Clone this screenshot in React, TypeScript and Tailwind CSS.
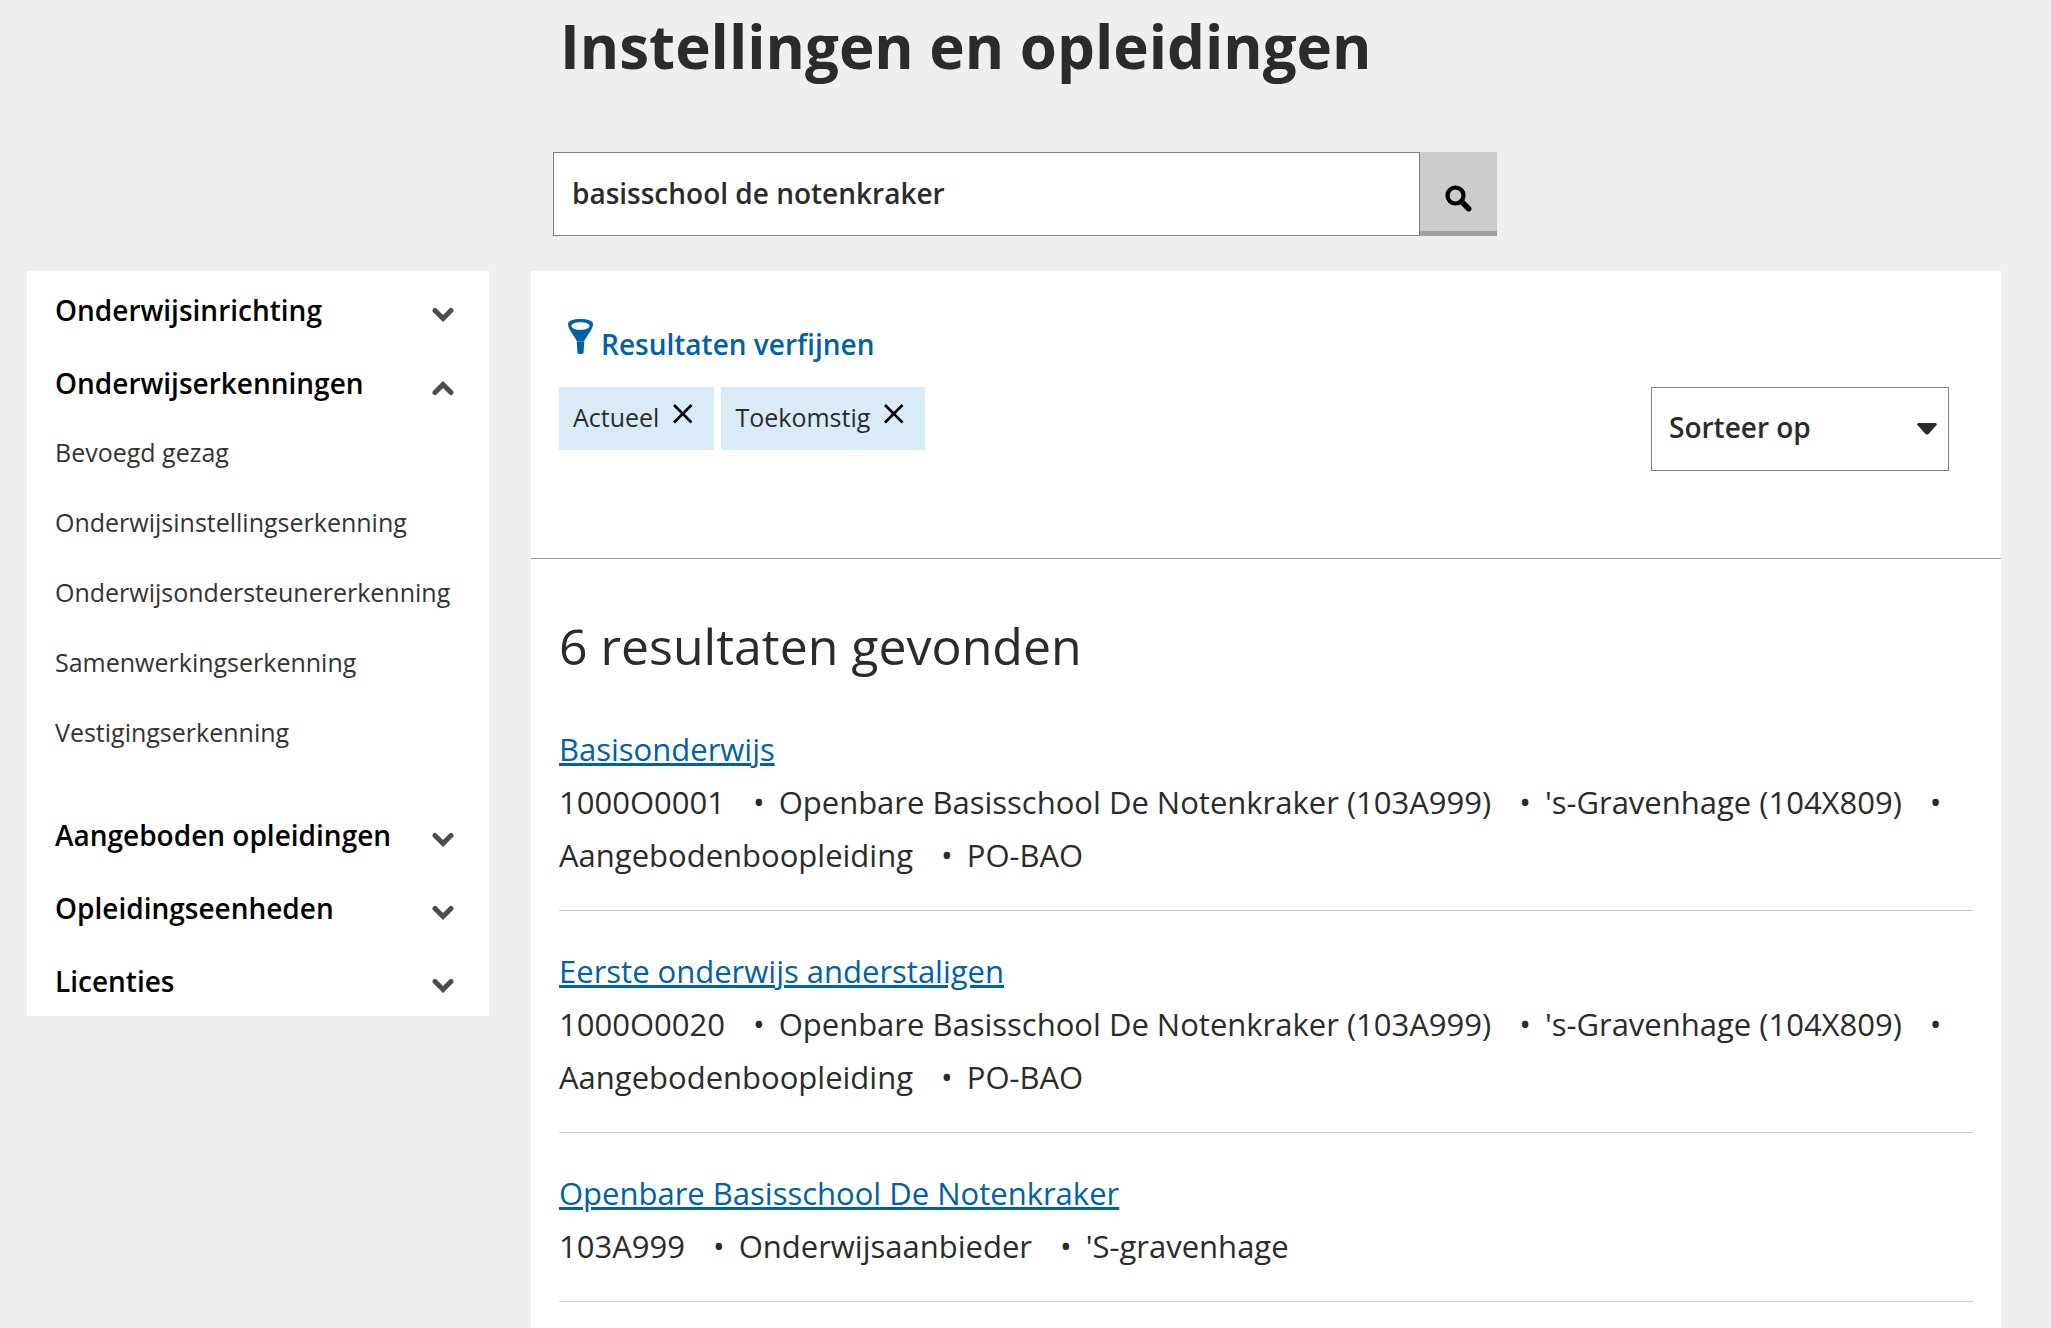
import { useState } from 'react'

type Group = { label: string; items?: string[] }
type Result = { title: string; details: string[] }

const groups: Group[] = [
  { label: 'Onderwijsinrichting' },
  {
    label: 'Onderwijserkenningen',
    items: [
      'Bevoegd gezag',
      'Onderwijsinstellingserkenning',
      'Onderwijsondersteunererkenning',
      'Samenwerkingserkenning',
      'Vestigingserkenning',
    ],
  },
  { label: 'Aangeboden opleidingen' },
  { label: 'Opleidingseenheden' },
  { label: 'Licenties' },
]

const results: Result[] = [
  {
    title: 'Basisonderwijs',
    details: ['1000O0001', 'Openbare Basisschool De Notenkraker (103A999)', "'s-Gravenhage (104X809)", 'Aangebodenboopleiding', 'PO-BAO'],
  },
  {
    title: 'Eerste onderwijs anderstaligen',
    details: ['1000O0020', 'Openbare Basisschool De Notenkraker (103A999)', "'s-Gravenhage (104X809)", 'Aangebodenboopleiding', 'PO-BAO'],
  },
  {
    title: 'Openbare Basisschool De Notenkraker',
    details: ['103A999', 'Onderwijsaanbieder', "'S-gravenhage"],
  },
]

const SearchIcon = () => (
  <svg className="w-7 h-7" viewBox="0 0 28 28" fill="none" stroke="#000" aria-hidden="true">
    <circle cx="10.5" cy="11.5" r="8" strokeWidth="4.200" />
    <path d="M16.5 17.500l7.200 7.200" strokeWidth="5.500" strokeLinecap="round" />
  </svg>
)

const Chevron = ({ open }: { open: boolean }) => (
  <svg className="w-6 h-4 mt-2" viewBox="0 0 24 16" fill="none" stroke="#4c4c4c" strokeWidth="5" strokeLinecap="round" aria-hidden="true">
    <path d={open ? 'M4 12.5l8-8 8 8' : 'M4 3.5l8 8 8-8'} />
  </svg>
)

const FunnelIcon = () => (
  <svg className="w-[25px] h-9" viewBox="0 0 25 36" fill="#0060a8" aria-hidden="true">
    <path
      fillRule="evenodd"
      d="M12.500 0C19.500 0 25 1.500 25 5c0 2.500-1 4.500-2.500 7L17 20.500c-.6 1.200-.8 1.500-1.500 1.500h-6c-.7 0-.9-.3-1.500-1.500L2.500 12C1 9.500 0 7.500 0 5 0 1.500 5.500 0 12.500 0zM12.500 3.300c-5 0-9 1.300-9 3.700s4 3.900 9 3.900 9-1.500 9-3.900-4-3.700-9-3.700z"
    />
    <path d="M8.700 22.300h7.600L15.500 34c-.2 1.400-5.800 1.400-6 0z" />
  </svg>
)

const CloseIcon = () => (
  <svg className="w-5 h-5" viewBox="0 0 20 20" fill="none" stroke="#000" strokeWidth="2.600" aria-hidden="true">
    <path d="M1 1l17.500 17.500M18.500 1L1 18.500" />
  </svg>
)

const NavGroup = ({ group }: { group: Group }) => {
  const [open, setOpen] = useState(!!group.items)

  return (
    <li>
      <button type="button" aria-expanded={open} onClick={() => setOpen(!open)} className="flex w-full h-[68px] items-center justify-between pr-[34px] text-[28px] font-semibold text-black">
        <span className="pb-0.5">{group.label}</span>
        <Chevron open={open} />
      </button>
      {open && group.items && (
        <ul className="pb-[29px]">
          {group.items.map(item => (
            <li key={item} className="h-[70px] flex items-center">
              <a href="#" className="text-[25px] text-[#333]">
                {item}
              </a>
            </li>
          ))}
        </ul>
      )}
    </li>
  )
}

const ResultItem = ({ result }: { result: Result }) => (
  <li className="pt-[34px] pb-7 border-b border-[#ccc] text-[31px] leading-[53px]">
    <h3>
      <a href="#" className="text-[#0060a8] underline decoration-[3px] underline-offset-2">
        {result.title}
      </a>
    </h3>
    <p>
      {result.details.map((detail, i) => (
        <span key={detail}>
          {detail}
          {i < result.details.length - 1 && <span className="ml-7 mr-1.5">•</span>}{' '}
        </span>
      ))}
    </p>
  </li>
)

export default () => {
  const [query, setQuery] = useState('basisschool de notenkraker')
  const [filters, setFilters] = useState(['Actueel', 'Toekomstig'])

  return (
    <div className="min-h-screen bg-[#efefef] pl-[27px] pr-[50px] text-[#2b2b2b] font-['Open_Sans','Noto_Sans',sans-serif]">
      {/*title and search*/}
      <header className="pl-[526px]">
        <h1 className="pl-[7px] pt-1 text-[60px] leading-[84px] font-bold">Instellingen en opleidingen</h1>
        <form role="search" className="mt-16 flex h-[84px] max-w-[944px]" onSubmit={e => e.preventDefault()}>
          <input
            type="text"
            aria-label="Zoeken"
            value={query}
            onChange={e => setQuery(e.target.value)}
            className="min-w-0 flex-1 border border-[#808080] bg-white px-[18px] pb-0.5 text-[28px] font-semibold"
          />
          <button type="submit" aria-label="Zoek" className="flex w-[77px] items-center justify-center border-b-[5px] border-[#a2a2a2] bg-[#ccc] pt-3">
            <SearchIcon />
          </button>
        </form>
      </header>

      <div className="mt-[35px] flex items-start gap-[42px]">
        {/*categories*/}
        <nav className="w-[462px] shrink-0 bg-white pl-7 pt-1.5">
          <ul className="flex flex-col gap-[5px]">
            {groups.map(group => (
              <NavGroup key={group.label} group={group} />
            ))}
          </ul>
        </nav>

        <main className="min-w-0 flex-1 bg-white">
          {/*filters*/}
          <section className="border-b border-[#999] pl-7 pr-[52px] pt-12 pb-[87px]">
            <button type="button" className="ml-[9px] flex h-[52px] items-start gap-2 text-[28px] leading-[50px] font-semibold text-[#0060a8]">
              <FunnelIcon />
              Resultaten verfijnen
            </button>
            <div className="mt-4 flex items-start justify-between">
              <div className="flex gap-[7px]">
                {filters.map(filter => (
                  <button
                    key={filter}
                    type="button"
                    aria-label={`Verwijder filter ${filter}`}
                    onClick={() => setFilters(filters.filter(item => item !== filter))}
                    className="flex h-[63px] items-start gap-[14px] bg-[#d9ebf7] pl-[14px] pr-[21px] pt-[17px] text-[25px] leading-[26px]"
                  >
                    <span>{filter}</span>
                    <CloseIcon />
                  </button>
                ))}
              </div>
              <div className="relative w-[298px]">
                <select aria-label="Sorteer op" className="h-[84px] w-full appearance-none border border-[#808080] bg-white pl-[17px] pb-1 text-[28px] font-semibold">
                  <option>Sorteer op</option>
                </select>
                <svg className="pointer-events-none absolute right-3 top-9 h-3 w-5" viewBox="0 0 20 12" fill="#2b2b2b" aria-hidden="true">
                  <path d="M1 0h18l1 1.500L11.500 11q-1.500 1-3 0L0 1.500z" />
                </svg>
              </div>
            </div>
          </section>

          {/*results*/}
          <section className="px-7 pt-[50px]">
            <h2 className="text-[50px] leading-[74px]">6 resultaten gevonden</h2>
            <ul className="mt-1.5">
              {results.map(result => (
                <ResultItem key={result.title} result={result} />
              ))}
            </ul>
            <div className="h-12" />
          </section>
        </main>
      </div>
    </div>
  )
}
